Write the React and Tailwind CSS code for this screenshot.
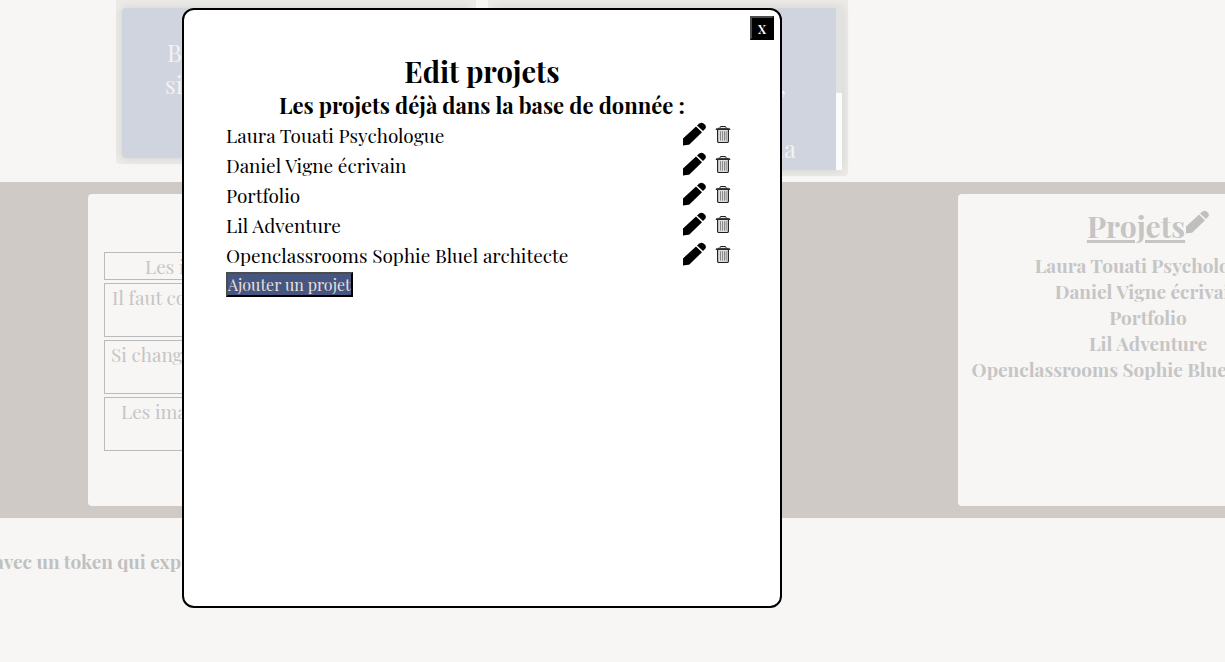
const projects = [
  'Laura Touati Psychologue',
  'Daniel Vigne écrivain',
  'Portfolio',
  'Lil Adventure',
  'Openclassrooms Sophie Bluel architecte',
];

function PencilIcon() {
  return (
    <svg viewBox="0 0 24 24" className="size-6" fill="currentColor" aria-hidden="true">
      <path d="M1 16.4 14 4.4 20 10.2 7.4 22.4Q7 22.8 6.4 22.8L1 23.6V16.4Z" />
      <path d="M15 3.5 17.4 1.4Q19.4 0 21.2 1.2L23 2.8Q24.6 4.8 23.2 6.8L21 9.1Z" />
    </svg>
  );
}

function TrashIcon() {
  return (
    <svg viewBox="0 0 16 20" className="h-5 w-4" fill="none" stroke="#1c1c1c" aria-hidden="true">
      <path d="M5 4V3.4Q5 2.5 6 2.5H10Q11 2.5 11 3.4V4" strokeWidth="1" />
      <path d="M1 5.5Q1.2 4.4 2.4 4.4H13.6Q14.8 4.4 15 5.5Z" strokeWidth=".9" fill="#777" />
      <path d="M2.6 6V17.2Q2.6 18.5 4 18.5H12Q13.4 18.5 13.4 17.2V6" strokeWidth="1.1" fill="#ddd" />
      <path d="M5.5 7.2V16.6M7.5 7.2V16.6M9.5 7.2V16.6M11.2 7.2V16.6" strokeWidth="1" stroke="#888" />
    </svg>
  );
}

function Backdrop() {
  return (
    <div className="text-[#c5c5c5]">
      <section className="flex h-[182px] items-start gap-3 pl-[116px] text-2xl text-[#f4f2f0]">
        <div className="w-[360px] shrink-0 rounded-b bg-[#ebeae6] px-1.5 pt-2 pb-1.5">
          <div className="h-[150px] rounded bg-[#d0d4de] pt-7 pl-[43px] leading-8 shadow-[0_0_10px_rgba(0,0,0,0.1)]">
            <p className="pl-0.5">B</p>
            <p>si</p>
          </div>
        </div>
        <div className="w-[360px] shrink-0 rounded-b bg-[#ebeae6] px-1.5 pt-2 pb-1.5">
          <div className="flex h-[162px] bg-[#d0d4de] shadow-[0_0_10px_rgba(0,0,0,0.1)]">
            <div className="flex-1 pt-[60px] text-right leading-8">
              <p className="pr-[50px]">,</p>
              <p className="pt-8 pr-10">na</p>
            </div>
            <div className="flex w-1.5 flex-col justify-end bg-[#e2e2e2]">
              <div className="h-[77px] bg-[#fcfcfc]" />
            </div>
          </div>
        </div>
      </section>

      <section className="flex gap-[270px] bg-[#d0cac7] py-3 pl-[88px]">
        <div className="h-[312px] w-[600px] shrink-0 rounded bg-[#f7f6f4] px-4 pt-[58px] text-[19px] leading-[26px]">
          <ul className="flex flex-col gap-[3px]">
            <li className="h-7 border border-[#bbb] pl-10">Les i</li>
            <li className="h-[54px] border border-[#bbb] pl-[7px]">Il faut co</li>
            <li className="h-[54px] border border-[#bbb] pl-1.5">Si chang</li>
            <li className="h-[54px] border border-[#bbb] pl-4">Les ima</li>
          </ul>
        </div>
        <div className="h-[312px] w-[380px] shrink-0 rounded bg-[#f7f6f4] pt-3 text-center font-bold">
          <div className="flex justify-center">
            <h2 className="text-[30px] leading-10 underline">Projets</h2>
            <button type="button" aria-label="Modifier les projets" className="mt-1 size-6 text-[#bfbfbf]">
              <PencilIcon />
            </button>
          </div>
          <ul className="pt-1.5 text-[19px] leading-[26px]">
            {projects.map((name) => (
              <li key={name}>{name}</li>
            ))}
          </ul>
        </div>
      </section>

      <p className="-ml-1.5 pt-[30px] text-[19px] leading-[26px] font-bold text-[#c0c0c0]">avec un token qui exp</p>
    </div>
  );
}

function EditDialog() {
  return (
    <div
      role="dialog"
      aria-labelledby="dialog-title"
      className="absolute top-2 left-[182px] h-[600px] w-[600px] rounded-xl border-2 border-black bg-white px-[42px] pt-[43px] text-black"
    >
      <button
        type="button"
        aria-label="Fermer"
        className="absolute top-1.5 right-1.5 size-6 border-2 border-t-[#4c4c4c] border-r-black border-b-black border-l-[#4c4c4c] bg-black text-base leading-5 font-medium text-white"
      >
        x
      </button>
      <h1 id="dialog-title" className="text-center text-[29px] leading-9 font-bold">Edit projets</h1>
      <h2 className="text-center text-[22px] leading-8 font-bold">Les projets déjà dans la base de donnée :</h2>
      <ul className="text-[19px] leading-7">
        {projects.map((name) => (
          <li key={name} className="flex h-[30px] items-start justify-between">
            <span>{name}</span>
            <span className="flex items-center gap-[9px] pt-px pr-[7px]">
              <button type="button" aria-label={`Modifier ${name}`} className="size-6">
                <PencilIcon />
              </button>
              <button type="button" aria-label={`Supprimer ${name}`} className="h-5 w-4">
                <TrashIcon />
              </button>
            </span>
          </li>
        ))}
      </ul>
      <button
        type="button"
        className="mt-px block border-2 border-t-[#4c4c4c] border-r-black border-b-black border-l-[#4c4c4c] bg-[#465680] text-base leading-[21px] text-[#e8e0dc]"
      >
        Ajouter un projet
      </button>
    </div>
  );
}

export default function App() {
  return (
    <main className="relative min-h-screen overflow-hidden bg-[#f7f6f4] font-['Playfair_Display','Liberation_Serif',serif]">
      <Backdrop />
      <EditDialog />
    </main>
  );
}
